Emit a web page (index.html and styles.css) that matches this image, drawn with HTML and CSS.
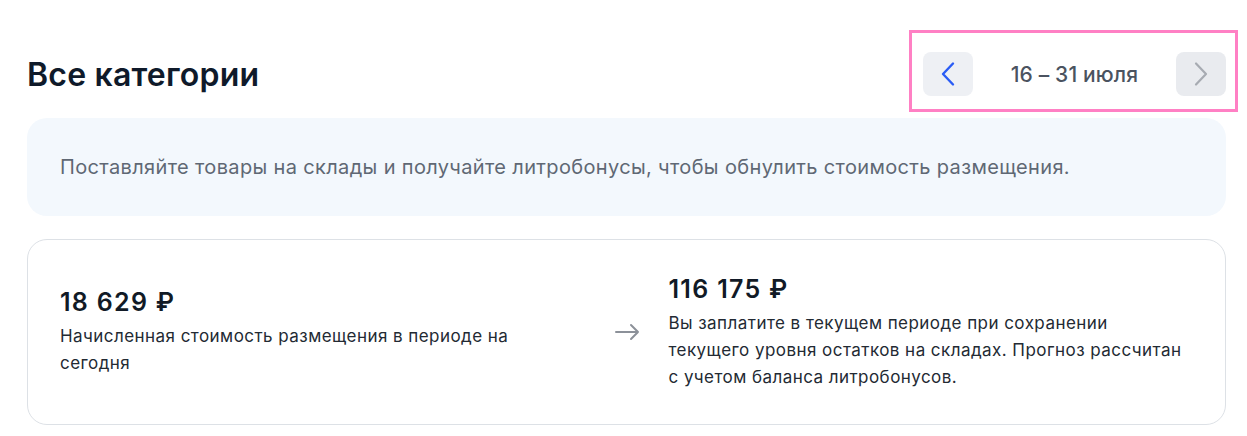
FILE: index.html
```html
<!DOCTYPE html>
<html lang="ru">
<head>
  <meta charset="UTF-8" />
  <meta name="viewport" content="width=device-width, initial-scale=1.0"/>
  <title>Все категории</title>
  <link rel="stylesheet" href="styles.css">
</head>
<body>
  <div class="page">
    <div class="header">
      <h1>Все категории</h1>
      <div class="pager">
        <button class="pager-btn" type="button">
          <svg width="20" height="26" viewBox="0 0 20 26"><path d="M15 2.5 L5 13 L15 23.5" fill="none" stroke="#2a5cf5" stroke-width="2.4" stroke-linecap="round" stroke-linejoin="round"/></svg>
        </button>
        <span class="pager-label">16 – 31 июля</span>
        <button class="pager-btn" type="button" disabled>
          <svg width="20" height="26" viewBox="0 0 20 26"><path d="M5 2.5 L15 13 L5 23.5" fill="none" stroke="#a7abb2" stroke-width="2.2" stroke-linecap="round" stroke-linejoin="round"/></svg>
        </button>
      </div>
    </div>

    <div class="notice">
      Поставляйте товары на склады и получайте литробонусы, чтобы обнулить стоимость размещения.
    </div>

    <div class="summary">
      <div class="summary-col left">
        <div class="amount">18 629 ₽</div>
        <p class="desc">Начисленная стоимость размещения в периоде на сегодня</p>
      </div>
      <div class="arrow">
        <svg width="28" height="18" viewBox="0 0 28 18"><path d="M3 9 H25 M18 2 L25 9 L18 16" fill="none" stroke="#8c9199" stroke-width="2" stroke-linecap="round" stroke-linejoin="round"/></svg>
      </div>
      <div class="summary-col right">
        <div class="amount">116 175 ₽</div>
        <p class="desc">Вы заплатите в текущем периоде при сохранении текущего уровня остатков на складах. Прогноз рассчитан с учетом баланса литробонусов.</p>
      </div>
    </div>
  </div>
</body>
</html>
```

FILE: styles.css
```css
* {
  box-sizing: border-box;
  margin: 0;
  padding: 0;
}
body {
  background: #ffffff;
  font-family: 'Inter', 'Noto Sans', sans-serif;
  color: #0f1a2a;
}
.page {
  padding: 52px 21px 0 27px;
}
.header {
  display: flex;
  justify-content: space-between;
  align-items: center;
}
h1 {
  font-size: 32px;
  font-weight: 600;
  color: #0f1a2a;
  letter-spacing: 0.2px;
}
.pager {
  position: relative;
  display: flex;
  align-items: center;
  width: 303px;
  justify-content: space-between;
}
/* highlight frame around the date switcher */
.pager::after {
  content: "";
  position: absolute;
  top: -22px;
  bottom: -16px;
  left: -14px;
  right: -12px;
  border: 3px solid #ff80c4;
  pointer-events: none;
}
.pager-btn {
  width: 50px;
  height: 44px;
  border: none;
  border-radius: 8px;
  background: #eef0f4;
  display: flex;
  align-items: center;
  justify-content: center;
  cursor: pointer;
}
.pager-btn:disabled {
  background: #e9ebef;
  cursor: default;
}
.pager-label {
  font-size: 21px;
  color: #4b5360;
  font-weight: 500;
  letter-spacing: 0.15px;
}
.notice {
  margin-top: 22px;
  background: #f3f8fd;
  border-radius: 20px;
  padding: 35px 33px 35px;
  font-size: 20px;
  line-height: 28px;
  letter-spacing: 0.35px;
  color: #5f6874;
}
.summary {
  margin-top: 23px;
  height: 186px;
  border: 1px solid #dde1e6;
  border-radius: 20px;
  padding: 0 32px;
  display: grid;
  grid-template-columns: 1fr 84px 1fr;
  align-items: center;
}
.left .desc {
  max-width: 480px;
}
.right .desc {
  max-width: 520px;
}
.amount {
  font-size: 25px;
  font-weight: 600;
  line-height: 31px;
  letter-spacing: 1.3px;
  color: #111a26;
}
.desc {
  margin-top: 5px;
  font-size: 17px;
  line-height: 27px;
  letter-spacing: 0.45px;
  color: #232a33;
}
.arrow {
  display: flex;
  justify-content: center;
}
```
